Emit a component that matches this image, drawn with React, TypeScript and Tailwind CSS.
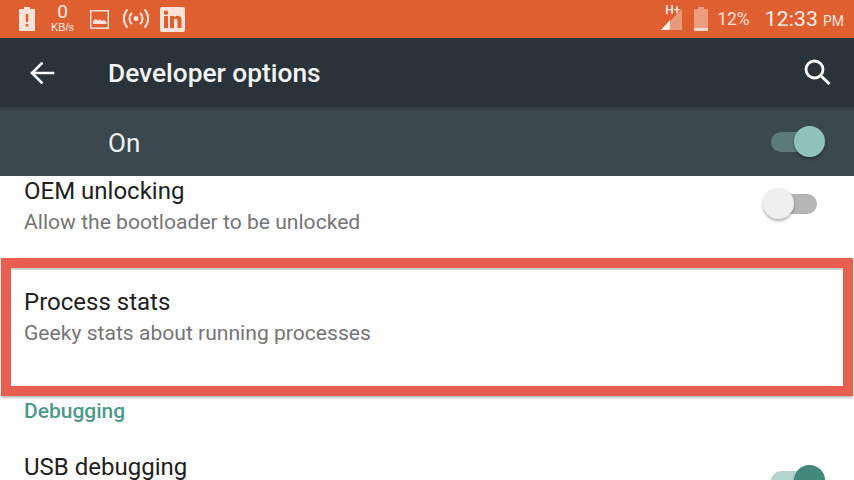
import React from "react";

function Toggle({ on, track, knob }: { on: boolean; track: string; knob: string }) {
  return (
    <div className="relative w-[54px] h-[32px] flex items-center">
      <div className={`w-[44px] h-[20px] rounded-full ${on ? "ml-0" : "ml-[10px]"} ${track}`} />
      <div
        className={`absolute top-0 ${on ? "right-0" : "left-0"} w-[31px] h-[31px] rounded-full ${knob} shadow-[0_2px_3px_rgba(0,0,0,0.3)]`}
      />
    </div>
  );
}

export default function App() {
  return (
    <div className="w-[854px] h-[480px] overflow-hidden bg-white flex flex-col font-['Roboto',sans-serif]">
      {/* Status bar */}
      <div className="h-[38px] shrink-0 bg-[#e05f31] flex items-center text-[#fdeee8]">
        <svg width="16" height="24" viewBox="0 0 16 24" className="ml-[19px]">
          <path fill="#fbe3da" fillRule="evenodd" d="M5 0h6v2h4a1 1 0 0 1 1 1v20a1 1 0 0 1-1 1H1a1 1 0 0 1-1-1V3a1 1 0 0 1 1-1h4zM6.800 7v8h2.400V7zm0 10v2.500h2.400V17z" />
        </svg>
        <div className="ml-[14px] w-[27px] flex flex-col items-center">
          <span className="text-[19px] leading-[18px] -mt-[3px]">0</span>
          <span className="text-[11px] leading-[12px] font-medium font-['Liberation_Sans',sans-serif]">KB/s</span>
        </div>
        <svg width="19" height="19" viewBox="0 0 19 19" className="ml-[14px]">
          <rect x="0.750" y="0.750" width="17.500" height="17.500" fill="none" stroke="#fbe3da" strokeWidth="1.500" />
          <path fill="#fbe3da" d="M3 14v-3l2.500-2 2.500 1.500 2-1.500 2 2 2-1 2.500 2v2z" />
        </svg>
        <svg width="28" height="22" viewBox="0 0 28 22" className="ml-[13px]">
          <circle cx="14" cy="10.500" r="2.500" fill="#fbe3da" />
          <path fill="none" stroke="#fbe3da" strokeWidth="2" strokeLinecap="round" d="M9.500 5.500a7 7 0 0 0 0 10M18.500 5.500a7 7 0 0 1 0 10M5 2a13 13 0 0 0 0 17M23 2a13 13 0 0 1 0 17" />
        </svg>
        <svg width="25" height="25" viewBox="0 0 25 25" className="ml-[10px]">
          <path fill="#fbe3da" fillRule="evenodd" d="M2 0h21a2 2 0 0 1 2 2v21a2 2 0 0 1-2 2H2a2 2 0 0 1-2-2V2a2 2 0 0 1 2-2zM4 9v12h4V9zm2-5.500a2.200 2.200 0 1 0 0 4.400 2.200 2.200 0 0 0 0-4.400zM10 9v12h4v-7c0-1.500 .800-2.200 1.800-2.200S17.500 12.500 17.500 14v7h4v-8c0-3-1.700-4.300-3.900-4.300-1.600 0-2.900 .700-3.600 1.900V9z" />
        </svg>
        <div className="flex-1" />
        <div className="relative w-[22px] h-[25px] mb-[3px]">
          <svg width="22" height="25" viewBox="0 0 22 25" className="absolute left-0 top-0">
            <path fill="#ea9a7c" d="M21 4v21H0z" />
            <path fill="#fdeee8" d="M9 15v10H0z" />
          </svg>
          <span className="absolute left-[4px] -top-[1px] text-[12px] leading-[12px] font-medium">H+</span>
        </div>
        <svg width="14" height="24" viewBox="0 0 14 24" className="ml-[11px]">
          <path fill="#ec9c7f" d="M4 0h6v2h4v20H0V2h4z" />
          <path fill="#f9dcd0" d="M0 21h14v3H0z" />
        </svg>
        <span className="ml-[9px] text-[17.500px] leading-[20px] text-[#fbe3da]">12%</span>
        <span className="ml-[15px] text-[21px] leading-[24px] tracking-[0.200px] text-[#fdeee8]">12:33</span>
        <span className="ml-[5px] mt-[3px] text-[14px] leading-[18px] mr-[10px] text-[#fbe3da]">PM</span>
      </div>

      {/* Toolbar */}
      <div className="h-[69px] shrink-0 bg-[#2a323a] flex items-center text-white">
        <svg width="26" height="24" viewBox="0 0 26 24" className="ml-[29px]">
          <path fill="none" stroke="white" strokeWidth="2.600" strokeLinecap="square" d="M3 12h21M12.500 2.500 3 12l9.500 9.500" />
        </svg>
        <span className="ml-[53px] text-[26.300px] font-medium leading-[30px] text-[#f3f4f5]">Developer options</span>
        <div className="flex-1" />
        <svg width="28" height="28" viewBox="0 0 28 28" className="mr-[23px] -mt-[2px]">
          <circle cx="11.500" cy="11.500" r="8.500" fill="none" stroke="white" strokeWidth="2.800" />
          <path stroke="white" strokeWidth="3" d="M17.500 17.500 26.500 26" />
        </svg>
      </div>

      {/* On bar */}
      <div className="h-[69px] shrink-0 bg-[#3b4850] flex items-center shadow-[inset_0_5px_3px_-3px_rgba(0,0,0,0.2)]">
        <span className="ml-[108px] mt-[2px] text-[26px] leading-[30px] text-[#eef1f2]">On</span>
        <div className="flex-1" />
        <div className="mr-[29px]">
          <Toggle on track="bg-[#5d7b7a]" knob="bg-[#8fc3bb]" />
        </div>
      </div>

      {/* OEM row */}
      <div className="h-[82px] shrink-0 flex items-start justify-between">
        <div className="pl-[24px]">
          <div className="text-[24px] leading-[30px] text-[#212121]">OEM unlocking</div>
          <div className="text-[21.100px] leading-[28px] mt-[2px] text-[#757575]">Allow the bootloader to be unlocked</div>
        </div>
        <div className="mt-[12px] mr-[37px]">
          <Toggle on={false} track="bg-[#b5b5b5]" knob="bg-[#efefef]" />
        </div>
      </div>

      {/* Highlighted row */}
      <div className="h-[138px] shrink-0 mx-[1px] border-[10px] border-[#e85f4f] shadow-[0_2px_2px_rgba(0,0,0,0.25),inset_0_2px_1px_rgba(0,0,0,0.2)] pl-[13px] pt-[19px]">
        <div className="text-[24px] leading-[30px] text-[#212121]">Process stats</div>
        <div className="text-[21.100px] leading-[28px] mt-[2px] text-[#757575]">Geeky stats about running processes</div>
      </div>

      {/* Debugging */}
      <div className="pl-[24px] mt-[3px] text-[21px] leading-[24px] font-medium text-[#4b9a8c]">Debugging</div>

      {/* USB row */}
      <div className="flex items-start justify-between mt-[29px]">
        <div className="pl-[24px] text-[24px] leading-[30px] text-[#212121]">USB debugging</div>
        <div className="mt-[13px] mr-[29px]">
          <Toggle on track="bg-[#b4d4cf]" knob="bg-[#42897c]" />
        </div>
      </div>
    </div>
  );
}
